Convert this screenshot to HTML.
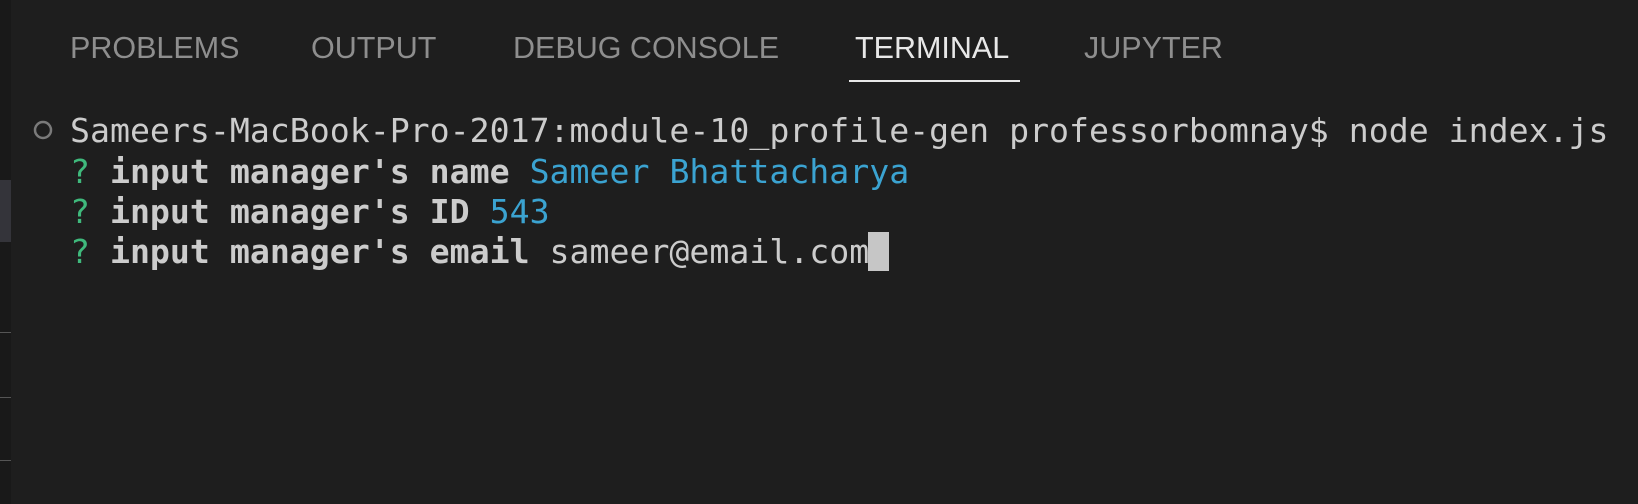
<!DOCTYPE html>
<html><head><meta charset="utf-8"><style>
html,body{margin:0;padding:0;background:#1e1e1e;width:1638px;height:504px;overflow:hidden;position:relative}
.strip{position:absolute;left:0;top:0;width:11px;height:504px;background:#191919}
.blk{position:absolute;left:0;top:180px;width:11px;height:62px;background:#34343a}
.mk{position:absolute;left:0;width:11px;height:1px;background:#555}
.tab{position:absolute;top:30px;font:30.5px "Liberation Sans",sans-serif;color:#8e8e8e;white-space:nowrap;line-height:36px}
.act{color:#e8e8e8}
.ul{position:absolute;left:849px;top:80px;width:171px;height:2px;background:#e8e8e8}
.ln{position:absolute;left:70px;font-family:"DejaVu Sans Mono","Liberation Mono",monospace;font-size:33.2px;color:#cccccc;white-space:pre;line-height:40px}
.b{font-weight:bold}
.g{color:#3fb97c}
.c{color:#3ba3d1}
.cur{position:absolute;left:868px;top:232px;width:21px;height:39px;background:#c6c6c6}
</style></head><body>
<div class="strip"></div><div class="blk"></div>
<div class="mk" style="top:332px"></div><div class="mk" style="top:397px"></div><div class="mk" style="top:460px"></div>
<div class="tab" style="left:70px">PROBLEMS</div>
<div class="tab" style="left:311px">OUTPUT</div>
<div class="tab" style="left:513px">DEBUG CONSOLE</div>
<div class="tab act" style="left:855px">TERMINAL</div>
<div class="tab" style="left:1084px">JUPYTER</div>
<div class="ul"></div>
<svg style="position:absolute;left:32px;top:119px" width="22" height="22"><circle cx="11" cy="11" r="8" fill="none" stroke="#7a7a7a" stroke-width="2.5"/></svg>
<div class="ln" style="top:111px">Sameers-MacBook-Pro-2017:module-10_profile-gen professorbomnay$ node index.js</div>
<div class="ln" style="top:152px"><span class="g">?</span> <span class="b">input manager's name</span> <span class="c">Sameer Bhattacharya</span></div>
<div class="ln" style="top:192px"><span class="g">?</span> <span class="b">input manager's ID</span> <span class="c">543</span></div>
<div class="ln" style="top:232px"><span class="g">?</span> <span class="b">input manager's email</span> sameer@email.com</div>
<div class="cur"></div>
</body></html>
